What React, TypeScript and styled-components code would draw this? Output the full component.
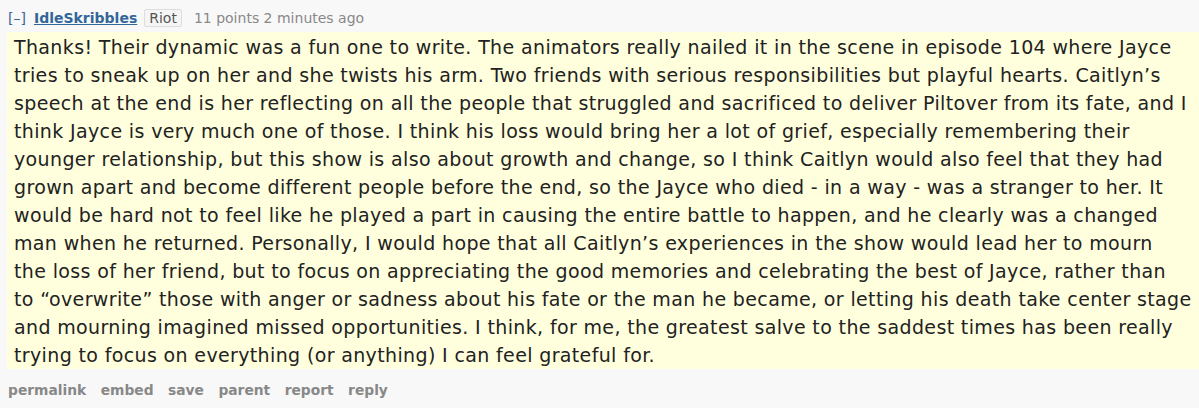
import React from "react"
import styled, {createGlobalStyle} from "styled-components"

const GlobalStyle = createGlobalStyle`
  html, body {
    margin: 0;
    padding: 0;
    background: #f8f8f8;
  }
  body {
    font-family: "DejaVu Sans", Verdana, sans-serif;
  }
`

const Comment = styled.div`
  width: 1199px;
  height: 408px;
  box-sizing: border-box;
  padding: 9px 0 0 7px;
  background: #f8f8f8;
  overflow: hidden;
`

const Tagline = styled.div`
  display: flex;
  align-items: center;
  height: 18px;
  padding-left: 1px;
  font-size: 14px;
  color: #888;
`

const Expand = styled.span`
  color: #369;
  margin-right: 8px;
`

const Author = styled.a`
  color: #369;
  font-weight: bold;
  text-decoration: underline;
  margin-right: 7px;
`

const Flair = styled.span`
  display: inline-flex;
  align-items: center;
  height: 16px;
  padding: 0 4px;
  border: 1px solid #ddd;
  border-radius: 2px;
  background: #f5f5f5;
  color: #545454;
  margin-right: 12px;
`

const Score = styled.span`
  color: #888;
`

const Body = styled.div`
  margin-top: 5px;
  padding: 1px 0 0 7px;
  background: #ffffdd;
  color: #222;
  font-size: 19px;
  line-height: 28px;
  letter-spacing: 0.36px;
  white-space: nowrap;
`

const Buttons = styled.ul`
  display: flex;
  gap: 14.5px;
  list-style: none;
  margin: 0;
  padding: 13px 0 0 1px;
  font-size: 13.8px;
  font-weight: bold;
`

const ButtonLink = styled.li`
  color: #888;
`

const actions = ["permalink", "embed", "save", "parent", "report", "reply"]

const lines = [
  "Thanks! Their dynamic was a fun one to write. The animators really nailed it in the scene in episode 104 where Jayce",
  "tries to sneak up on her and she twists his arm. Two friends with serious responsibilities but playful hearts. Caitlyn\u2019s",
  "speech at the end is her reflecting on all the people that struggled and sacrificed to deliver Piltover from its fate, and I",
  "think Jayce is very much one of those. I think his loss would bring her a lot of grief, especially remembering their",
  "younger relationship, but this show is also about growth and change, so I think Caitlyn would also feel that they had",
  "grown apart and become different people before the end, so the Jayce who died - in a way - was a stranger to her. It",
  "would be hard not to feel like he played a part in causing the entire battle to happen, and he clearly was a changed",
  "man when he returned. Personally, I would hope that all Caitlyn\u2019s experiences in the show would lead her to mourn",
  "the loss of her friend, but to focus on appreciating the good memories and celebrating the best of Jayce, rather than",
  "to \u201coverwrite\u201d those with anger or sadness about his fate or the man he became, or letting his death take center stage",
  "and mourning imagined missed opportunities. I think, for me, the greatest salve to the saddest times has been really",
  "trying to focus on everything (or anything) I can feel grateful for."
]

export default function App() {
  return (
    <>
      <GlobalStyle />
      <Comment>
        <Tagline>
          <Expand>[–]</Expand>
          <Author>IdleSkribbles</Author>
          <Flair>Riot</Flair>
          <Score>11 points 2 minutes ago</Score>
        </Tagline>
        <Body>
          {lines.map((line, i) => (
            <React.Fragment key={i}>
              {line}
              {i < lines.length - 1 && <br />}
            </React.Fragment>
          ))}
        </Body>
        <Buttons>
          {actions.map(a => (
            <ButtonLink key={a}>{a}</ButtonLink>
          ))}
        </Buttons>
      </Comment>
    </>
  )
}
